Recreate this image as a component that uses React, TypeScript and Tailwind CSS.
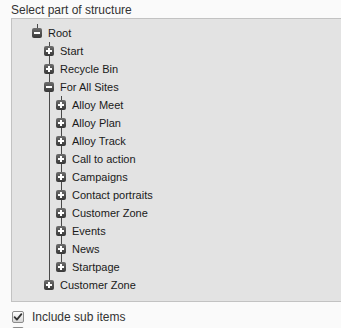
import React from "react";

type Node = { label: string; expanded?: boolean; children?: Node[] };

const tree: Node = {
  label: "Root",
  expanded: true,
  children: [
    { label: "Start" },
    { label: "Recycle Bin" },
    {
      label: "For All Sites",
      expanded: true,
      children: [
        { label: "Alloy Meet" },
        { label: "Alloy Plan" },
        { label: "Alloy Track" },
        { label: "Call to action" },
        { label: "Campaigns" },
        { label: "Contact portraits" },
        { label: "Customer Zone" },
        { label: "Events" },
        { label: "News" },
        { label: "Startpage" },
      ],
    },
    { label: "Customer Zone" },
  ],
};

type Row = { node: Node; depth: number; isLast: boolean; continues: boolean[] };

function flatten(node: Node, depth: number, isLast: boolean, continues: boolean[], out: Row[]) {
  out.push({ node, depth, isLast, continues });
  if (node.expanded && node.children) {
    node.children.forEach((c, i) => {
      flatten(c, depth + 1, i === node.children!.length - 1, [...continues, !isLast], out);
    });
  }
  return out;
}

function Toggle({ expanded }: { expanded?: boolean }) {
  return (
    <span className="relative z-10 block h-[10px] w-[10px] rounded-[2px] bg-linear-to-b from-[#6e6e6e] to-[#383838]">
      <span className="absolute left-[2px] top-[4px] h-[2px] w-[6px] bg-white" />
      {!expanded && <span className="absolute left-[4px] top-[2px] h-[6px] w-[2px] bg-white" />}
    </span>
  );
}

function TreeRow({ row }: { row: Row }) {
  const cols = row.continues;
  return (
    <div className="flex h-[18px] items-center">
      {cols.map((c, i) => (
        <span key={i} className="relative h-[18px] w-[12px] shrink-0">
          {c && <span className="absolute left-[5px] top-0 h-[18px] w-px bg-[#4a4a4a]" />}
        </span>
      ))}
      <span className="relative flex h-[18px] w-[10px] shrink-0 items-center">
        <span className="absolute left-[5px] top-0 h-[5px] w-px bg-[#4a4a4a]" />
        {!row.isLast && <span className="absolute left-[5px] top-[13px] h-[5px] w-px bg-[#4a4a4a]" />}
        <Toggle expanded={row.node.expanded} />
      </span>
      <span className="ml-[6px] whitespace-nowrap text-[11px] leading-[18px] text-[#1a1a1a]">{row.node.label}</span>
    </div>
  );
}

function Check({ checked }: { checked?: boolean }) {
  return (
    <span className="relative block h-[12px] w-[12px] rounded-[2px] border border-[#8c8c8c] bg-linear-to-b from-[#ffffff] to-[#d6d6d6]">
      {checked && (
        <svg viewBox="0 0 12 12" className="absolute -left-px -top-px h-[12px] w-[12px]">
          <path d="M2.6 6.2 L4.9 8.6 L9.4 3.2" fill="none" stroke="#333" strokeWidth="1.8" strokeLinecap="round" strokeLinejoin="round" />
        </svg>
      )}
    </span>
  );
}

export default function App() {
  const rows = flatten(tree, 0, true, [], []);
  return (
    <div
      className="h-[328px] w-[341px] overflow-hidden bg-[#fafafa] pl-[11px]"
      style={{ fontFamily: '"Liberation Sans", Arial, sans-serif' }}
    >
      <div className="h-[18px] pt-px text-[12px] leading-[18px] text-[#333]">Select part of structure</div>
      <div className="w-[350px] border border-[#c2c2c2] bg-[#e3e3e3] pb-[7px] pl-[20px] pt-[5px]">
        {rows.map((r, i) => (
          <TreeRow key={i} row={r} />
        ))}
      </div>
      <div className="mt-[7px] flex h-[16px] items-center pl-px">
        <Check checked />
        <span className="ml-[8px] text-[12px] leading-[16px] text-[#333]">Include sub items</span>
      </div>
      <div className="flex h-[16px] items-center pl-px">
        <Check />
      </div>
    </div>
  );
}
